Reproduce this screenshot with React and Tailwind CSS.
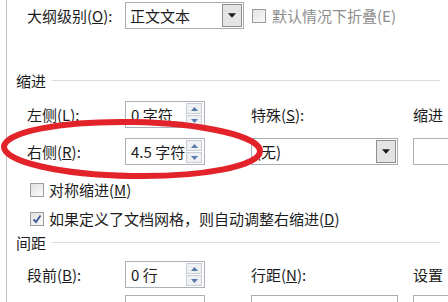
import React from 'react';

const font = { fontFamily: '"Noto Sans CJK SC", "Liberation Sans", sans-serif' };

// 小三角
const Tri = ({ up, color = '#1a1a1a', w = 7, h = 4 }) => (
  <svg width={w} height={h} viewBox="0 0 7 4">
    <path d={up ? 'M0 4 L3.5 0 L7 4 Z' : 'M0 0 L7 0 L3.5 4 Z'} fill={color} />
  </svg>
);

const Spin = ({ value }) => (
  <div className="w-[80px] h-[27px] shrink-0 border border-[#acb0b8] bg-white flex items-center justify-between pl-[5px] pr-[2px]">
    <span className="text-[15px] leading-none text-[#1c1c1c] whitespace-pre">{value}</span>
    <div className="flex flex-col gap-[1px]">
      <div className="w-[16px] h-[11px] border border-[#c9cdd3] bg-[#eef0f3] flex items-center justify-center">
        <Tri up color="#5879ad" w={7} h={4} />
      </div>
      <div className="w-[16px] h-[11px] border border-[#c9cdd3] bg-[#eef0f3] flex items-center justify-center">
        <Tri color="#5879ad" w={7} h={4} />
      </div>
    </div>
  </div>
);

const Select = ({ value, w }) => (
  <div className={`${w} h-[27px] shrink-0 border border-[#a9acb2] bg-white flex items-center justify-between pl-[4px] pr-[1px]`}>
    <span className="text-[15px] leading-none text-[#1c1c1c]">{value}</span>
    <div className="w-[20px] h-[23px] border border-[#8f8f8f] bg-[#e4e4e4] flex items-center justify-center">
      <Tri w={8} h={5} />
    </div>
  </div>
);

const Check = ({ checked }) => (
  <div className="w-[14px] h-[14px] shrink-0 border border-[#9c9c9c] bg-gradient-to-br from-[#e2e2e2] to-[#fafafa] flex items-center justify-center">
    {checked && (
      <svg width="10" height="10" viewBox="0 0 10 10">
        <path d="M1.5 5.5 L4 8 L8.5 1.5" stroke="#3d5a9e" strokeWidth="1.8" fill="none" />
      </svg>
    )}
  </div>
);

const Section = ({ title }) => (
  <div className="flex items-center h-[20px] pl-[9px]">
    <span className="text-[15px] leading-none text-[#1c1c1c]">{title}</span>
    <div className="flex-1 h-px bg-[#d8dde2] ml-[6px] mr-[8px]" />
  </div>
);

const Label = ({ children, w = 'w-[98px]' }) => (
  <span className={`${w} shrink-0 text-[15px] leading-none text-[#1c1c1c] whitespace-nowrap`}>{children}</span>
);

export default function App() {
  return (
    <div className="w-[448px] h-[302px] overflow-hidden bg-white relative" style={font}>
      <div className="ml-[6px] h-full border-l border-[#c4c4c4] flex flex-col overflow-hidden">
        {/* 大纲级别 */}
        <div className="flex items-center h-[27px] mt-[2px] pl-[20px]">
          <Label>大纲级别(<u>O</u>):</Label>
          <Select value="正文文本" w="w-[119px]" />
          <div className="ml-[8px]"><Check /></div>
          <span className="ml-[6px] text-[15px] leading-none text-[#8c8c8c] whitespace-nowrap">默认情况下折叠(E)</span>
        </div>

        <div className="mt-[41px]"><Section title="缩进" /></div>

        {/* 左侧 */}
        <div className="flex items-center h-[27px] mt-[11px] pl-[20px]">
          <Label>左侧(<u>L</u>):</Label>
          <Spin value="0 字符" />
          <Label w="w-[162px] ml-[46px]">特殊(<u>S</u>):</Label>
          <Label w="w-[30px]">缩进</Label>
        </div>

        {/* 右侧 */}
        <div className="flex items-center h-[27px] mt-[10px] pl-[20px]">
          <Label>右侧(<u>R</u>):</Label>
          <Spin value="4.5 字符" />
          <div className="ml-[46px] shrink-0"><Select value="(无)" w="w-[147px]" /></div>
          <div className="ml-[15px] w-[60px] h-[27px] border border-[#acb0b8] bg-white shrink-0" />
        </div>

        {/* 复选框 */}
        <div className="flex items-center h-[20px] mt-[17px] pl-[23px]">
          <Check />
          <span className="ml-[5px] text-[15px] leading-none text-[#1c1c1c]">对称缩进(<u>M</u>)</span>
        </div>
        <div className="flex items-center h-[20px] mt-[14px] pl-[23px]">
          <Check checked />
          <span className="ml-[5px] text-[15px] leading-none text-[#1c1c1c] whitespace-nowrap">如果定义了文档网格，则自动调整右缩进(<u>D</u>)</span>
        </div>

        <div className="mt-[6px]"><Section title="间距" /></div>

        {/* 段前 */}
        <div className="flex items-center h-[27px] mt-[9px] pl-[20px]">
          <Label>段前(<u>B</u>):</Label>
          <Spin value="0 行" />
          <Label w="w-[162px] ml-[46px]">行距(<u>N</u>):</Label>
          <Label w="w-[30px]">设置</Label>
        </div>
        <div className="flex items-start h-[27px] mt-[7px] pl-[118px]">
          <div className="w-[80px] h-[27px] shrink-0 border border-[#acb0b8] bg-white" />
          <div className="ml-[46px] w-[147px] h-[27px] shrink-0 border border-[#a9acb2] bg-white" />
          <div className="ml-[15px] w-[60px] h-[27px] shrink-0 border border-[#acb0b8] bg-white" />
        </div>
      </div>

      {/* 红色圈注 */}
      <svg className="absolute left-0 top-0 pointer-events-none" width="448" height="302">
        <ellipse cx="132" cy="149" rx="128" ry="27" fill="none" stroke="#e2242a" strokeWidth="6" transform="rotate(1 132 149)" />
      </svg>
    </div>
  );
}
